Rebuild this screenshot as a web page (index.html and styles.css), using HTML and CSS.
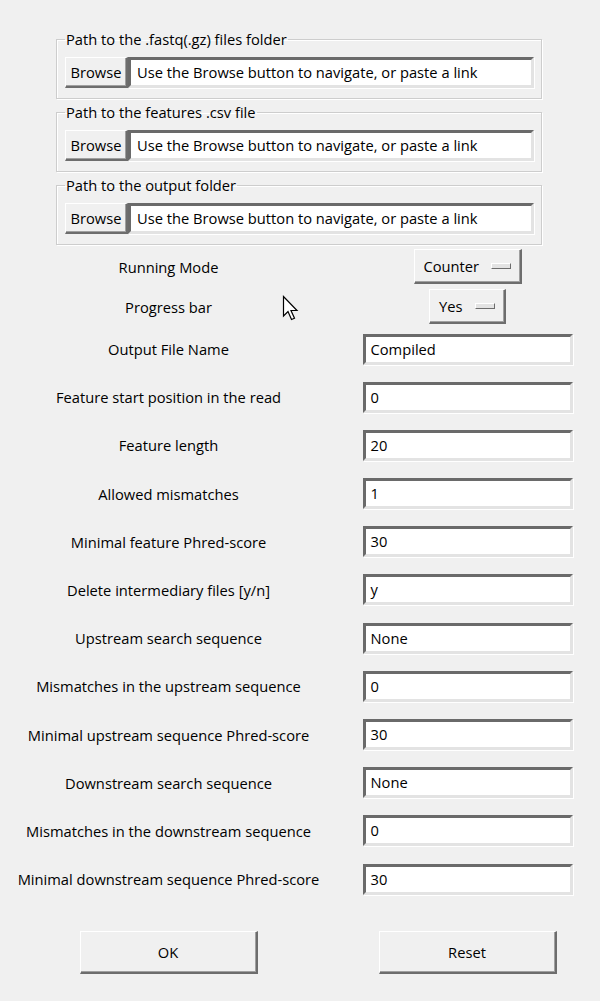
FILE: index.html
```html
<!DOCTYPE html>
<html>
<head>
    <title>Counter</title>
    <link rel="stylesheet" href="styles.css">
</head>
<body>
    <div class="window">
        <fieldset class="group">
            <legend>Path to the .fastq(.gz) files folder</legend>
            <div class="pathrow">
                <div class="btn browse">Browse</div>
                <div class="entry path">Use the Browse button to navigate, or paste a link</div>
            </div>
        </fieldset>
        <fieldset class="group">
            <legend>Path to the features .csv file</legend>
            <div class="pathrow">
                <div class="btn browse">Browse</div>
                <div class="entry path">Use the Browse button to navigate, or paste a link</div>
            </div>
        </fieldset>
        <fieldset class="group">
            <legend>Path to the output folder</legend>
            <div class="pathrow">
                <div class="btn browse">Browse</div>
                <div class="entry path">Use the Browse button to navigate, or paste a link</div>
            </div>
        </fieldset>

        <div class="modes">
            <div class="label">Running Mode</div>
            <div class="cell"><div class="menubtn counter">Counter<span class="ind"></span></div></div>
            <div class="label">Progress bar</div>
            <div class="cell"><div class="menubtn yes">Yes<span class="ind"></span></div></div>
        </div>

        <div class="params">
            <div class="label">Output File Name</div>
            <div class="cell"><div class="entry field">Compiled</div></div>
            <div class="label">Feature start position in the read</div>
            <div class="cell"><div class="entry field">0</div></div>
            <div class="label">Feature length</div>
            <div class="cell"><div class="entry field">20</div></div>
            <div class="label">Allowed mismatches</div>
            <div class="cell"><div class="entry field">1</div></div>
            <div class="label">Minimal feature Phred-score</div>
            <div class="cell"><div class="entry field">30</div></div>
            <div class="label">Delete intermediary files [y/n]</div>
            <div class="cell"><div class="entry field">y</div></div>
            <div class="label">Upstream search sequence</div>
            <div class="cell"><div class="entry field">None</div></div>
            <div class="label">Mismatches in the upstream sequence</div>
            <div class="cell"><div class="entry field">0</div></div>
            <div class="label">Minimal upstream sequence Phred-score</div>
            <div class="cell"><div class="entry field">30</div></div>
            <div class="label">Downstream search sequence</div>
            <div class="cell"><div class="entry field">None</div></div>
            <div class="label">Mismatches in the downstream sequence</div>
            <div class="cell"><div class="entry field">0</div></div>
            <div class="label">Minimal downstream sequence Phred-score</div>
            <div class="cell"><div class="entry field">30</div></div>
        </div>

        <div class="actions">
            <div class="cell"><div class="btn big">OK</div></div>
            <div class="cell"><div class="btn big">Reset</div></div>
        </div>

        <svg class="cursor" width="18" height="27" viewBox="0 0 18 27">
            <path d="M1.5 1.5 L1.5 21 L6 16.5 L9.5 24.5 L12.5 23.2 L9 15.5 L15 15.5 Z" fill="#fff" stroke="#000" stroke-width="1.2" stroke-linejoin="miter"/>
        </svg>
    </div>
</body>
</html>
```

FILE: styles.css
```css
*{
    padding: 0;
    margin: 0;
    box-sizing: border-box;
}
body{
    background: #f0f0f0;
    font-family: "Open Sans", "Noto Sans", sans-serif;
    font-size: 14.7px;
    color: #000;
}
.window{
    position: relative;
    width: 600px;
    height: 1001px;
    padding-top: 30px;
}
.group{
    width: 486px;
    margin: 0 0 4px 56px;
    padding: 9px 7px 10px 8px;
    border: 1px solid #cdcdcd;
    box-shadow: inset 1px 1px 0 #fff, 1px 1px 0 #fff;
}
.group legend{
    padding: 0 1px;
    line-height: 18px;
}
.pathrow{
    display: flex;
}
.btn{
    background: #f0f0f0;
    border-top: 1px solid #fff;
    border-left: 1px solid #fff;
    border-right: 2px solid #6d6d6d;
    border-bottom: 2px solid #6d6d6d;
    box-shadow: inset -1px -1px 0 #a0a0a0;
    text-align: center;
}
.browse{
    width: 63px;
    height: 31px;
    line-height: 28px;
}
.entry{
    background: #fff;
    border-top: 3px solid #6a6a6a;
    border-left: 3px solid #6a6a6a;
    border-right: 3px solid #e3e3e3;
    border-bottom: 3px solid #e3e3e3;
    box-shadow: 1px 1px 0 #fff;
    white-space: nowrap;
    overflow: hidden;
}
.path{
    flex: 1;
    height: 31px;
    line-height: 25px;
    padding-left: 6px;
}
.modes{
    display: grid;
    grid-template-columns: 337px 261px;
    margin-top: 4px;
    row-gap: 5px;
}
.label{
    display: flex;
    align-items: center;
    justify-content: center;
}
.cell{
    display: flex;
    align-items: center;
    justify-content: center;
}
.menubtn{
    display: flex;
    align-items: center;
    height: 35px;
    padding: 0 9px 0 9px;
    background: #f0f0f0;
    border-top: 1px solid #fff;
    border-left: 1px solid #fff;
    border-right: 2px solid #6d6d6d;
    border-bottom: 2px solid #6d6d6d;
    box-shadow: inset -1px -1px 0 #a0a0a0;
}
.counter{
    width: 108px;
}
.yes{
    width: 77px;
}
.ind{
    display: block;
    width: 20px;
    height: 6px;
    margin-left: auto;
    background: #e3e3e3;
    border-top: 1px solid #fff;
    border-left: 1px solid #fff;
    border-right: 1px solid #6d6d6d;
    border-bottom: 1px solid #6d6d6d;
}
.params{
    display: grid;
    grid-template-columns: 337px 261px;
    grid-auto-rows: 30px;
    row-gap: 18.2px;
    margin-top: 10px;
}
.field{
    width: 210px;
    height: 31px;
    line-height: 25px;
    padding-left: 5px;
}
.actions{
    display: grid;
    grid-template-columns: 337px 261px;
    margin-top: 37px;
}
.big{
    width: 178px;
    height: 43px;
    line-height: 40px;
}
.cursor{
    position: absolute;
    left: 282px;
    top: 295px;
}
```
